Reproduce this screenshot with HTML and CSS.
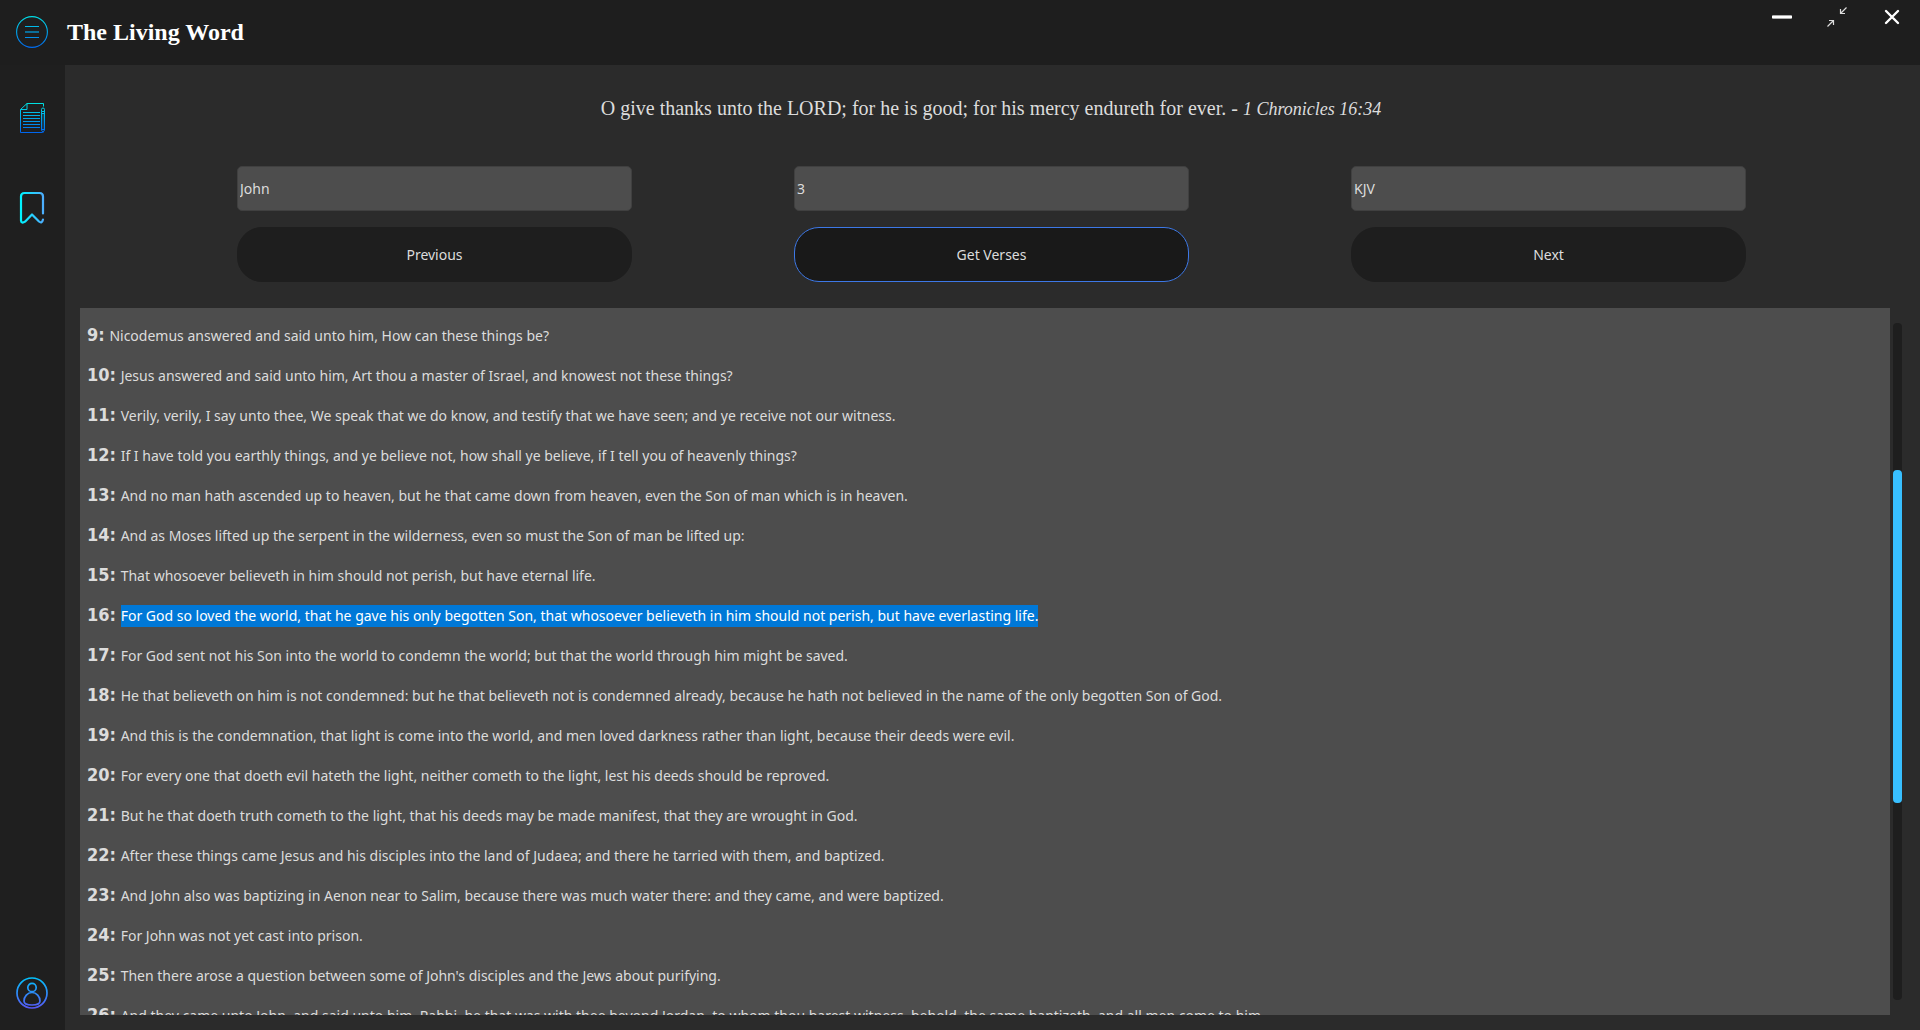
FILE: index.html
```html
<!DOCTYPE html>
<html lang="en">
<head>
<meta charset="utf-8">
<title>The Living Word</title>
<link rel="stylesheet" href="styles.css">
</head>
<body>
<div class="app">
  <header class="titlebar">
    <button class="icon-button menu-button" aria-label="Menu">
      <svg width="32" height="32" viewBox="0 0 32 32" fill="none">
        <defs><linearGradient id="menu" gradientUnits="userSpaceOnUse" x1="0" y1="0" x2="0" y2="32"><stop stop-color="#00e0e6"/><stop offset="1" stop-color="#0069f0"/></linearGradient></defs>
        <g stroke="url(#menu)"><circle cx="16" cy="16" r="15.4" stroke-width="1.1"/><path d="M9 10.5h14M9 21.5h14"/><path d="M9 16h14" stroke-width="2" opacity=".6"/></g>
      </svg>
    </button>
    <h1 class="title">The Living Word</h1>
    <div class="window-controls">
      <button class="icon-button" aria-label="Minimize">
        <svg width="20" height="20" viewBox="0 0 20 20"><rect y="8" width="20" height="4" rx="1" fill="#aaa"/><path d="M0 10h20" stroke="#fff" stroke-width="2"/></svg>
      </button>
      <button class="icon-button" aria-label="Restore">
        <svg width="20" height="20" viewBox="0 0 20 20" fill="none" stroke="#ddd" stroke-width="1.2"><path d="M19.500.5 13.500 6.500M13.500 2v4.500H18M.5 19.500l6-6M2 13.500h4.500V18"/></svg>
      </button>
      <button class="icon-button" aria-label="Close">
        <svg width="20" height="20" viewBox="0 0 20 20" stroke="#fff" stroke-width="2.400" stroke-linecap="round"><path d="m4 4 12 12M16 4 4 16"/></svg>
      </button>
    </div>
  </header>

  <div class="body">
    <nav class="sidebar">
      <button class="icon-button" aria-label="Bible">
        <svg width="24" height="32" viewBox="0 0 24 32" fill="none">
          <defs><linearGradient id="doc" gradientUnits="userSpaceOnUse" x1="0" y1="0" x2="0" y2="32"><stop stop-color="#00e6e0"/><stop offset=".5" stop-color="#00a8ec"/><stop offset="1" stop-color="#0060f0"/></linearGradient></defs>
          <g stroke="url(#doc)"><path d="M23.500 4.500V1.500H7L.5 7.500v23H22.500M7 1.500v6H.5M3 10.500H20M3 13.500H20M3 16.500H20M3 19.500H20M3 22.500H20M3 25.500H20"/><path d="M21.500 9.500V7.500q0-1.500 1.500-1.500t1.500 1.500V28L23 30.500 21.500 28zM21.500 9.500h3M21.500 11.500h3M21.500 27.500h3"/><path d="M23 12v15" opacity=".5"/></g>
        </svg>
      </button>
      <button class="icon-button" aria-label="Bookmarks">
        <svg width="24" height="34" viewBox="0 0 24 34" fill="none">
          <defs><linearGradient id="mark" gradientUnits="userSpaceOnUse" x1="1" y1="0" x2="24" y2="0"><stop stop-color="#00f2fe"/><stop offset="1" stop-color="#4facfe"/></linearGradient></defs>
          <path d="M23 22.500V5.500Q23 2 19.500 2H4.500Q1 2 1 5.500V29.500q.5 3.500 4 1.200L12 23.500l7 7q3 2.500 4-2" stroke="url(#mark)" stroke-width="2.200" stroke-linecap="round" stroke-linejoin="round"/>
        </svg>
      </button>
      <button class="icon-button account" aria-label="Account">
        <svg width="32" height="32" viewBox="0 0 32 32" fill="none">
          <defs><linearGradient id="user" gradientUnits="userSpaceOnUse" x1="0" y1="0" x2="0" y2="32"><stop stop-color="#00c6ff"/><stop offset="1" stop-color="#5a55f5"/></linearGradient></defs>
          <g stroke="url(#user)" stroke-width="1.700"><circle cx="16" cy="16" r="15"/><circle cx="16" cy="10.500" r="4.200"/><path d="M16 15.500c-4.500 0-8 4-8 8.500q0 4 8 4t8-4c0-4.500-3.500-8.500-8-8.500Z"/></g>
        </svg>
      </button>
    </nav>

    <main class="main">
      <p class="quote">O give thanks unto the LORD; for he is good; for his mercy endureth for ever. - <em>1 Chronicles 16:34</em></p>
      <form class="controls">
        <input class="field" type="text" aria-label="Book" value="John">
        <input class="field" type="text" aria-label="Chapter" value="3">
        <input class="field" type="text" aria-label="Version" value="KJV">
        <button class="action" type="button">Previous</button>
        <button class="action action-primary" type="button">Get Verses</button>
        <button class="action" type="button">Next</button>
      </form>
      <div class="reader">
        <section class="verses" aria-label="Verses">
          <p class="verse"><b>9:</b> <span>Nicodemus answered and said unto him, How can these things be?</span></p>
          <p class="verse"><b>10:</b> <span>Jesus answered and said unto him, Art thou a master of Israel, and knowest not these things?</span></p>
          <p class="verse"><b>11:</b> <span>Verily, verily, I say unto thee, We speak that we do know, and testify that we have seen; and ye receive not our witness.</span></p>
          <p class="verse"><b>12:</b> <span>If I have told you earthly things, and ye believe not, how shall ye believe, if I tell you of heavenly things?</span></p>
          <p class="verse"><b>13:</b> <span>And no man hath ascended up to heaven, but he that came down from heaven, even the Son of man which is in heaven.</span></p>
          <p class="verse"><b>14:</b> <span>And as Moses lifted up the serpent in the wilderness, even so must the Son of man be lifted up:</span></p>
          <p class="verse"><b>15:</b> <span>That whosoever believeth in him should not perish, but have eternal life.</span></p>
          <p class="verse"><b>16:</b> <mark>For God so loved the world, that he gave his only begotten Son, that whosoever believeth in him should not perish, but have everlasting life.</mark></p>
          <p class="verse"><b>17:</b> <span>For God sent not his Son into the world to condemn the world; but that the world through him might be saved.</span></p>
          <p class="verse"><b>18:</b> <span>He that believeth on him is not condemned: but he that believeth not is condemned already, because he hath not believed in the name of the only begotten Son of God.</span></p>
          <p class="verse"><b>19:</b> <span>And this is the condemnation, that light is come into the world, and men loved darkness rather than light, because their deeds were evil.</span></p>
          <p class="verse"><b>20:</b> <span>For every one that doeth evil hateth the light, neither cometh to the light, lest his deeds should be reproved.</span></p>
          <p class="verse"><b>21:</b> <span>But he that doeth truth cometh to the light, that his deeds may be made manifest, that they are wrought in God.</span></p>
          <p class="verse"><b>22:</b> <span>After these things came Jesus and his disciples into the land of Judaea; and there he tarried with them, and baptized.</span></p>
          <p class="verse"><b>23:</b> <span>And John also was baptizing in Aenon near to Salim, because there was much water there: and they came, and were baptized.</span></p>
          <p class="verse"><b>24:</b> <span>For John was not yet cast into prison.</span></p>
          <p class="verse"><b>25:</b> <span>Then there arose a question between some of John's disciples and the Jews about purifying.</span></p>
          <p class="verse"><b>26:</b> <span>And they came unto John, and said unto him, Rabbi, he that was with thee beyond Jordan, to whom thou barest witness, behold, the same baptizeth, and all men come to him.</span></p>
        </section>
        <div class="scrollbar"><div class="before"></div><div class="thumb"></div><div class="after"></div></div>
      </div>
    </main>
  </div>
</div>
</body>
</html>
```
FILE: styles.css
```css
* { box-sizing: border-box; }

body {
  margin: 0;
  background: #2b2b2b;
  color: #dcdcdc;
  font-family: "Noto Sans", sans-serif;
  font-size: 14px;
}

.app {
  display: flex;
  flex-direction: column;
  height: 100vh;
}

.titlebar {
  display: flex;
  align-items: center;
  height: 65px;
  flex-shrink: 0;
  padding: 0 0 1px 16px;
  background: #1e1e1e;
}

.icon-button {
  display: block;
  padding: 0;
  border: 0;
  background: none;
}

.icon-button svg {
  display: block;
  overflow: visible;
}

.title {
  margin: 0 0 0 19px;
  color: #fff;
  font-family: "Liberation Serif", serif;
  font-size: 24px;
  font-weight: 700;
  line-height: 32px;
}

.window-controls {
  display: flex;
  gap: 35px;
  align-self: flex-start;
  margin-left: auto;
  padding: 7px 18px 0 0;
}

.body {
  display: flex;
  flex: 1;
  min-height: 0;
}

.sidebar {
  display: flex;
  flex-direction: column;
  align-items: center;
  gap: 57px;
  width: 65px;
  flex-shrink: 0;
  padding: 37px 1px 21px 0;
  background: #1f1f1f;
}

.account { margin-top: auto; }

.main {
  display: flex;
  flex: 1;
  flex-direction: column;
  min-width: 0;
  padding: 30px 18px 15px 15px;
}

.quote {
  margin: 0 0 44px;
  font-family: "Liberation Serif", serif;
  font-size: 20px;
  line-height: 27px;
  text-align: center;
}

.quote em {
  font-size: 18px;
  line-height: 18px;
}

.controls {
  display: grid;
  grid-template-columns: repeat(3, 1fr);
  gap: 16px 162px;
  padding: 0 156px 0 157px;
}

.field {
  width: 100%;
  height: 45px;
  padding: 0 2px;
  border: 1px solid #404040;
  border-radius: 5px;
  background: #4d4d4d;
  color: #dcdcdc;
  font: inherit;
}

.action {
  height: 55px;
  border: 1px solid #1e1e1e;
  border-radius: 25px;
  background: #1e1e1e;
  color: #dcdcdc;
  font: inherit;
}

.action-primary {
  border-color: #3d78e6;
  background: #191919;
}

.reader {
  display: flex;
  flex: 1;
  gap: 3px;
  min-height: 0;
  margin-top: 26px;
}

.verses {
  flex: 1;
  overflow: hidden;
  padding: 7px;
  background: #4d4d4d;
}

.verse {
  height: 40px;
  margin: 0;
  line-height: 40px;
  white-space: nowrap;
}

.verse b {
  margin-right: 1px;
  font-family: "DejaVu Sans Condensed", "DejaVu Sans", sans-serif;
  font-size: 18px;
}

.verse mark {
  padding: 1px 0 2px;
  background: #0078d7;
  color: #fff;
}

.scrollbar {
  display: flex;
  flex-direction: column;
  width: 9px;
  margin: 15px 0;
  border-radius: 4px;
  background: #1e1e1e;
}

.before { flex: 147; }
.thumb { flex: 333; border-radius: 4px; background: #38bfff; }
.after { flex: 197; }
```
